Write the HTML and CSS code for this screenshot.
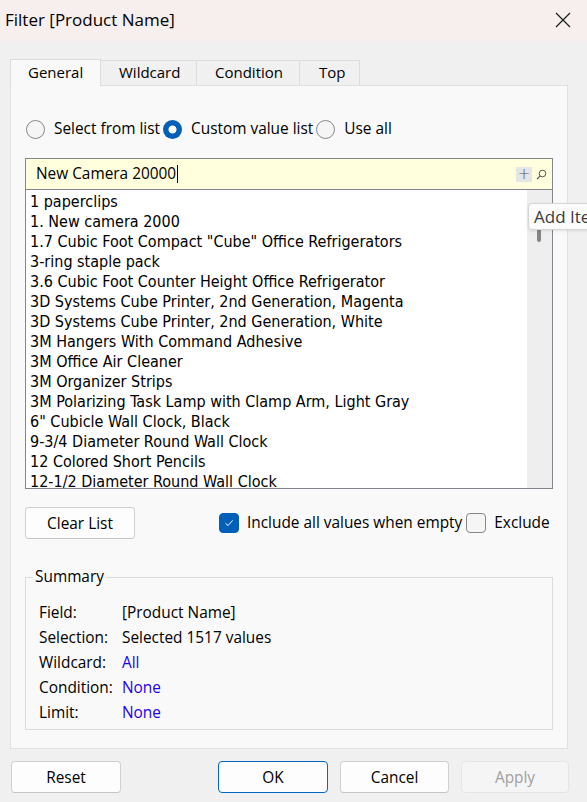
FILE: index.html
```html
<!DOCTYPE html>
<html>
<head>
<meta charset="utf-8">
<link rel="stylesheet" href="styles.css">
</head>
<body>
<div class="window">
  <div class="titlebar">
    <span class="title">Filter [Product Name]</span>
    <svg class="close" width="16" height="16" viewBox="0 0 16 16"><path d="M1 1 L15 15 M15 1 L1 15" stroke="#1a1a1a" stroke-width="1.2" fill="none"/></svg>
  </div>

  <div class="tabs">
    <div class="tab active">General</div>
    <div class="tab">Wildcard</div>
    <div class="tab">Condition</div>
    <div class="tab">Top</div>
  </div>

  <div class="panel">
    <div class="radios">
      <span class="radio"></span><span class="rlabel">Select from list</span>
      <span class="radio on"></span><span class="rlabel">Custom value list</span>
      <span class="radio"></span><span class="rlabel">Use all</span>
    </div>

    <div class="listbox">
      <div class="inputrow">
        <span class="inputtext">New Camera 20000</span><span class="caret"></span>
        <span class="spacer"></span>
        <span class="addbtn">+</span>
        <svg class="search" width="11" height="11" viewBox="0 0 11 11"><circle cx="6.5" cy="4.5" r="3.3" stroke="#555" stroke-width="1" fill="none"/><path d="M4.2 6.8 L1 10" stroke="#555" stroke-width="1.2"/></svg>
      </div>
      <div class="listarea">
        <div class="items">
          <div class="item">1 paperclips</div>
          <div class="item">1. New camera 2000</div>
          <div class="item">1.7 Cubic Foot Compact "Cube" Office Refrigerators</div>
          <div class="item">3-ring staple pack</div>
          <div class="item">3.6 Cubic Foot Counter Height Office Refrigerator</div>
          <div class="item">3D Systems Cube Printer, 2nd Generation, Magenta</div>
          <div class="item">3D Systems Cube Printer, 2nd Generation, White</div>
          <div class="item">3M Hangers With Command Adhesive</div>
          <div class="item">3M Office Air Cleaner</div>
          <div class="item">3M Organizer Strips</div>
          <div class="item">3M Polarizing Task Lamp with Clamp Arm, Light Gray</div>
          <div class="item">6" Cubicle Wall Clock, Black</div>
          <div class="item">9-3/4 Diameter Round Wall Clock</div>
          <div class="item">12 Colored Short Pencils</div>
          <div class="item">12-1/2 Diameter Round Wall Clock</div>
        </div>
        <div class="scrollbar"><span class="thumb"></span></div>
      </div>
    </div>

    <div class="controls">
      <button class="btn clear">Clear List</button>
      <div class="checks">
        <span class="check on"><svg width="12" height="12" viewBox="0 0 12 12"><path d="M2.5 6.3 L5 8.6 L9.6 3.4" stroke="#fff" stroke-width="1" fill="none"/></svg></span>
        <span class="clabel">Include all values when empty</span>
        <span class="check"></span>
        <span class="clabel">Exclude</span>
      </div>
    </div>

    <fieldset class="summary">
      <legend>Summary</legend>
      <div class="grid">
        <span>Field:</span><span>[Product Name]</span>
        <span>Selection:</span><span>Selected 1517 values</span>
        <span>Wildcard:</span><span class="link">All</span>
        <span>Condition:</span><span class="link">None</span>
        <span>Limit:</span><span class="link">None</span>
      </div>
    </fieldset>
  </div>

  <div class="footer">
    <button class="btn">Reset</button>
    <div class="right">
      <button class="btn default">OK</button>
      <button class="btn cancel">Cancel</button>
      <button class="btn disabled">Apply</button>
    </div>
  </div>

  <div class="tooltip">Add Item</div>
</div>
</body>
</html>
```

FILE: styles.css
```css
* { box-sizing: border-box; }
html, body { margin: 0; padding: 0; }
body {
  background: #f0f0f0;
  font-family: "Open Sans", "Noto Sans", sans-serif;
  font-size: 15.4px;
  color: #000;
}
.window {
  position: relative;
  width: 587px;
  height: 802px;
  overflow: hidden;
  background: #f0f0f0;
}
.titlebar {
  height: 41px;
  background: #f7eeee;
  display: flex;
  align-items: center;
  justify-content: space-between;
  padding: 0 16px 0 5px;
}
.title { font-size: 17px; line-height: 20px; margin-top: -1px; }
.close { display: block; margin-top: -2px; }

.tabs {
  display: flex;
  align-items: flex-end;
  margin-top: 18px;
  padding-left: 10px;
  height: 26px;
  position: relative;
  z-index: 1;
  font-size: 15px;
}
.tab {
  height: 25px;
  border: 1px solid #dcdcdc;
  border-bottom: none;
  border-left: none;
  background: #f0f0f0;
  line-height: 23px;
}
.tab.active {
  height: 27px;
  margin-bottom: -1px;
  background: #f9f9f9;
  border-left: 1px solid #dcdcdc;
  padding: 0 0 0 17px;
  line-height: 25px;
  width: 91px;
}
.tab:nth-child(2) { width: 96px; padding: 0 0 0 18px; }
.tab:nth-child(3) { width: 103px; padding: 0 0 0 18px; }
.tab:nth-child(4) { width: 60px; padding: 0 0 0 19px; }

.panel {
  margin: 0 19px 0 10px;
  height: 664px;
  background: #f9f9f9;
  border: 1px solid #e1e1e1;
  padding: 0 14px 0 15px;
}

.radios {
  display: flex;
  align-items: center;
  margin-top: 33px;
  height: 20px;
  white-space: nowrap;
}
.radio {
  width: 19px;
  height: 19px;
  border-radius: 50%;
  border: 1px solid #878787;
  background: #f5f5f5;
  flex: none;
}
.radio.on {
  border: none;
  background: radial-gradient(circle, #ffffff 0 3.6px, #005fb8 4.4px);
}
.rlabel { margin: 0 3px 0 9px; line-height: 20px; }

.listbox {
  margin-top: 19px;
  border: 1px solid #82858c;
  width: 528px;
  margin-left: -1px;
}
.inputrow {
  height: 31px;
  background: #ffffdd;
  border-bottom: 1px solid #82858c;
  display: flex;
  align-items: center;
  padding: 0 5px 0 10px;
}
.inputtext { line-height: 20px; }
.caret { width: 1px; height: 18px; background: #000; margin-left: 1px; }
.spacer { flex: 1; }
.addbtn {
  width: 16px;
  height: 15px;
  background: #e5e5e5;
  color: #555;
  font-size: 15px;
  line-height: 14px;
  text-align: center;
  font-family: "DejaVu Sans", sans-serif;
  font-weight: 300;
}
.search { margin-left: 4px; }

.listarea {
  display: flex;
  height: 298px;
  background: #fff;
  overflow: hidden;
}
.items {
  flex: 1;
  padding: 2px 0 0 4px;
  font-family: "DejaVu Sans Condensed", "DejaVu Sans", sans-serif;
  font-stretch: condensed;
  font-size: 16px;
  white-space: nowrap;
  overflow: hidden;
}
.item { line-height: 20px; height: 20px; }
.scrollbar {
  width: 25px;
  flex: none;
  background: #eeeeee;
  position: relative;
}
.thumb {
  position: absolute;
  left: 10px;
  top: 14px;
  width: 4px;
  height: 38px;
  border-radius: 2px;
  background: #858585;
}

.controls {
  margin-top: 18px;
  display: flex;
  align-items: center;
  height: 32px;
}
.btn {
  font-family: "Open Sans", "Noto Sans", sans-serif;
  font-size: 15.4px;
  color: #000;
  background: #fdfdfd;
  border: 1px solid #d0d0d0;
  border-bottom-color: #c4c4c4;
  border-radius: 4px;
  height: 32px;
  width: 110px;
  padding: 0;
  flex: none;
}
.clear { margin-left: -1px; }
.checks {
  display: flex;
  align-items: center;
  margin-left: 84px;
  white-space: nowrap;
  flex: none;
}
.check {
  width: 20px;
  height: 20px;
  border-radius: 4px;
  border: 1px solid #878787;
  background: #f5f5f5;
  display: flex;
  align-items: center;
  justify-content: center;
  flex: none;
}
.check.on { background: #005fb8; border-color: #005fb8; }
.clabel { margin: 0 4px 0 8px; line-height: 20px; flex: none; }

.summary {
  margin: 28px 0 0 -1px;
  width: 528px;
  border: 1px solid #dcdcdc;
  padding: 13px 12px 4px 13px;
  min-width: 0;
}
.summary legend {
  padding: 0 2px;
  margin-left: -6px;
  line-height: 20px;
}
.grid {
  display: grid;
  grid-template-columns: 83px 1fr;
  line-height: 25px;
}
.link { color: #2200ee; }

.footer {
  display: flex;
  justify-content: space-between;
  margin-top: 12px;
  padding: 0 18px 0 11px;
}
.right { display: flex; gap: 12px; }
.default { border: 1px solid #0067c0; width: 110px; }
.cancel { width: 109px; }
.disabled { background: #f5f5f5; border-color: #e5e5e5; color: #a0a0a0; width: 108px; }

.tooltip {
  position: absolute;
  left: 528px;
  top: 203px;
  height: 27px;
  width: 90px;
  padding-left: 5px;
  background: #fbfbfb;
  border: 1px solid #d5d5d5;
  border-radius: 4px;
  color: #3c3c3c;
  font-size: 17px;
  line-height: 25px;
  box-shadow: 0 1px 3px rgba(0,0,0,0.1);
}
```
